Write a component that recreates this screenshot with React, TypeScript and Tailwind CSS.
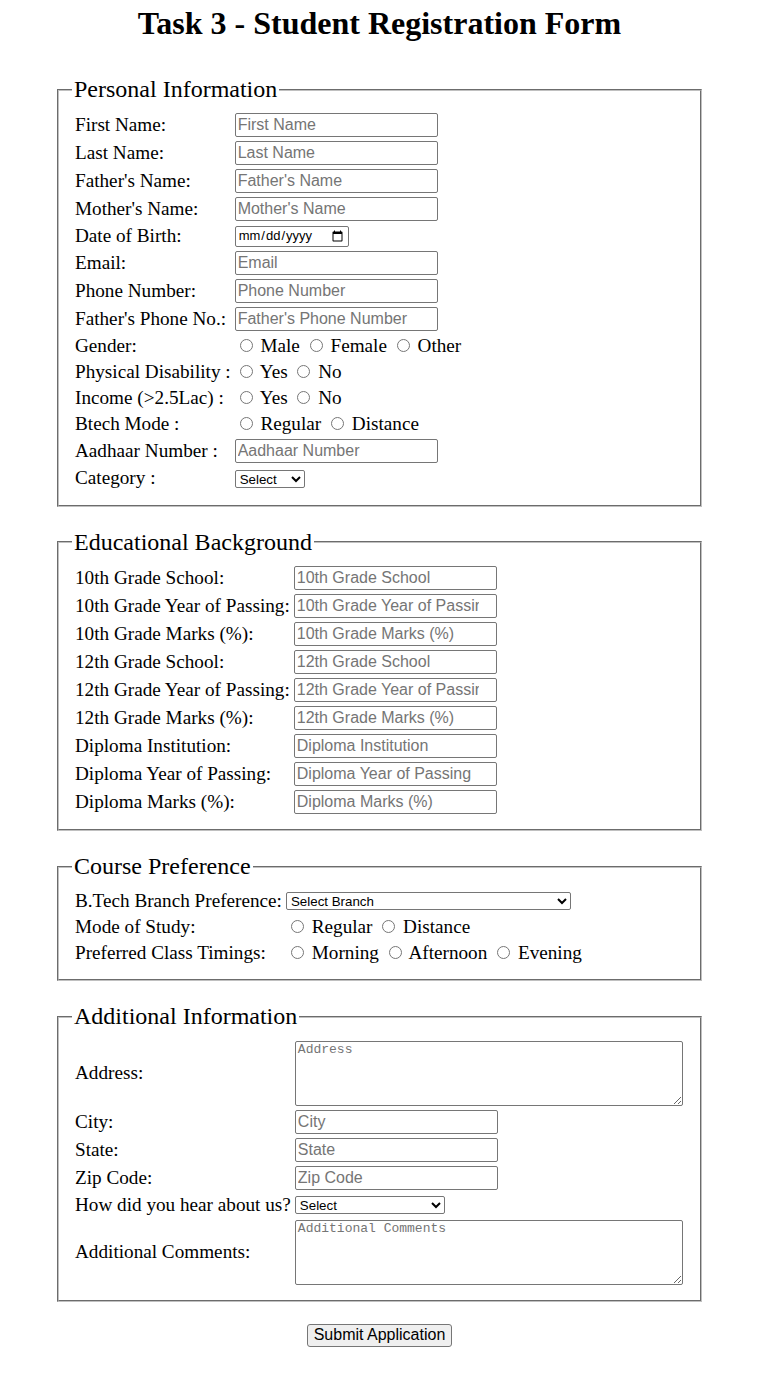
import React from "react";

const inputCls =
  "block w-[203px] h-[24px] px-[2px] border border-[#767676] rounded-[2px] bg-white font-['Liberation_Sans',Arial,sans-serif] text-[16px] leading-[1.15] text-black placeholder:text-[#757575]";
const selectCls =
  "block h-[18px] border border-[#767676] rounded-[2px] bg-white font-['Liberation_Sans',Arial,sans-serif] text-[13.33px] leading-[1.15] text-black";
const areaCls =
  "block w-[388px] h-[65px] px-[2px] py-[1px] border border-[#767676] rounded-[2px] bg-white font-['Liberation_Mono',monospace] text-[13px] leading-[1.15] text-black placeholder:text-[#757575]";
const radioCls = "m-[3px_3px_0_5px]";

function Radio({ name, label }: { name: string; label: string }) {
  return (
    <>
      <input type="radio" name={name} className={radioCls} /> {label}{" "}
    </>
  );
}

function Row({ label, children }: { label: string; children: React.ReactNode }) {
  return (
    <tr>
      <td className="p-[1px] align-middle whitespace-nowrap">{label}</td>
      <td className="p-[1px] align-middle whitespace-nowrap">{children}</td>
    </tr>
  );
}

function TextRow({ label, placeholder, type = "text" }: { label: string; placeholder: string; type?: string }) {
  return (
    <Row label={label}>
      <input type={type} placeholder={placeholder} className={inputCls} />
    </Row>
  );
}

function Section({ title, children, last = false }: { title: string; children: React.ReactNode; last?: boolean }) {
  return (
    <fieldset
      className={`border-2 [border-style:groove] border-[#c0c0c0] px-[13px] pt-[6.7px] pb-[12px] text-[19.2px] leading-[1.15] ${last ? "" : "mb-[22px]"}`}
    >
      <legend className="px-[2px] text-[24px] leading-[1.15]">{title}</legend>
      <table className="border-separate border-spacing-[2px]">
        <tbody>{children}</tbody>
      </table>
    </fieldset>
  );
}

export default function App() {
  return (
    <div className="min-h-[1375px] bg-white text-black leading-[1.15] font-['Liberation_Serif','Times_New_Roman',serif]">
      <h1 className="pt-[5px] mb-[34px] text-center text-[32px] font-bold leading-[36.8px]">
        Task 3 - Student Registration Form
      </h1>
      <form className="w-[645px] mx-auto">
        <Section title="Personal Information">
          <TextRow label="First Name:" placeholder="First Name" />
          <TextRow label="Last Name:" placeholder="Last Name" />
          <TextRow label="Father's Name:" placeholder="Father's Name" />
          <TextRow label="Mother's Name:" placeholder="Mother's Name" />
          <Row label="Date of Birth:">
            <input
              type="date"
              className="block w-[114px] h-[21px] px-[2px] border border-[#767676] rounded-[2px] bg-white font-['Liberation_Sans',Arial,sans-serif] text-[13px] leading-[1.15] text-black"
            />
          </Row>
          <TextRow label="Email:" placeholder="Email" type="email" />
          <TextRow label="Phone Number:" placeholder="Phone Number" type="tel" />
          <TextRow label="Father's Phone No.:" placeholder="Father's Phone Number" type="tel" />
          <Row label="Gender:">
            <Radio name="gender" label="Male" />
            <Radio name="gender" label="Female" />
            <Radio name="gender" label="Other" />
          </Row>
          <Row label="Physical Disability :">
            <Radio name="disability" label="Yes" />
            <Radio name="disability" label="No" />
          </Row>
          <Row label="Income (>2.5Lac) :">
            <Radio name="income" label="Yes" />
            <Radio name="income" label="No" />
          </Row>
          <Row label="Btech Mode :">
            <Radio name="btechMode" label="Regular" />
            <Radio name="btechMode" label="Distance" />
          </Row>
          <TextRow label="Aadhaar Number :" placeholder="Aadhaar Number" />
          <Row label="Category :">
            <select className={`${selectCls} w-[70px]`} defaultValue="">
              <option value="">Select</option>
              <option>General</option>
              <option>OBC</option>
              <option>SC</option>
              <option>ST</option>
            </select>
          </Row>
        </Section>

        <Section title="Educational Background">
          <TextRow label="10th Grade School:" placeholder="10th Grade School" />
          <TextRow label="10th Grade Year of Passing:" placeholder="10th Grade Year of Passing" type="number" />
          <TextRow label="10th Grade Marks (%):" placeholder="10th Grade Marks (%)" />
          <TextRow label="12th Grade School:" placeholder="12th Grade School" />
          <TextRow label="12th Grade Year of Passing:" placeholder="12th Grade Year of Passing" type="number" />
          <TextRow label="12th Grade Marks (%):" placeholder="12th Grade Marks (%)" />
          <TextRow label="Diploma Institution:" placeholder="Diploma Institution" />
          <TextRow label="Diploma Year of Passing:" placeholder="Diploma Year of Passing" />
          <TextRow label="Diploma Marks (%):" placeholder="Diploma Marks (%)" />
        </Section>

        <Section title="Course Preference">
          <Row label="B.Tech Branch Preference:">
            <select className={`${selectCls} w-[285px]`} defaultValue="">
              <option value="">Select Branch</option>
              <option>Computer Science and Engineering</option>
              <option>Information Technology</option>
              <option>Electronics and Communication</option>
              <option>Electrical Engineering</option>
              <option>Mechanical Engineering</option>
              <option>Civil Engineering</option>
            </select>
          </Row>
          <Row label="Mode of Study:">
            <Radio name="study" label="Regular" />
            <Radio name="study" label="Distance" />
          </Row>
          <Row label="Preferred Class Timings:">
            <Radio name="timing" label="Morning" />
            <Radio name="timing" label="Afternoon" />
            <Radio name="timing" label="Evening" />
          </Row>
        </Section>

        <Section title="Additional Information" last>
          <Row label="Address:">
            <textarea placeholder="Address" className={areaCls} />
          </Row>
          <TextRow label="City:" placeholder="City" />
          <TextRow label="State:" placeholder="State" />
          <TextRow label="Zip Code:" placeholder="Zip Code" />
          <Row label="How did you hear about us?">
            <select className={`${selectCls} w-[150px]`} defaultValue="">
              <option value="">Select</option>
              <option>Friends</option>
              <option>Social Media</option>
              <option>Advertisement</option>
              <option>Other</option>
            </select>
          </Row>
          <Row label="Additional Comments:">
            <textarea placeholder="Additional Comments" className={areaCls} />
          </Row>
        </Section>

        <div className="mt-[22px] text-center">
          <button
            type="submit"
            className="h-[23px] px-[6px] border border-[#767676] rounded-[3px] bg-[#efefef] font-['Liberation_Sans',Arial,sans-serif] text-[16px] text-black leading-none"
          >
            Submit Application
          </button>
        </div>
      </form>
    </div>
  );
}
